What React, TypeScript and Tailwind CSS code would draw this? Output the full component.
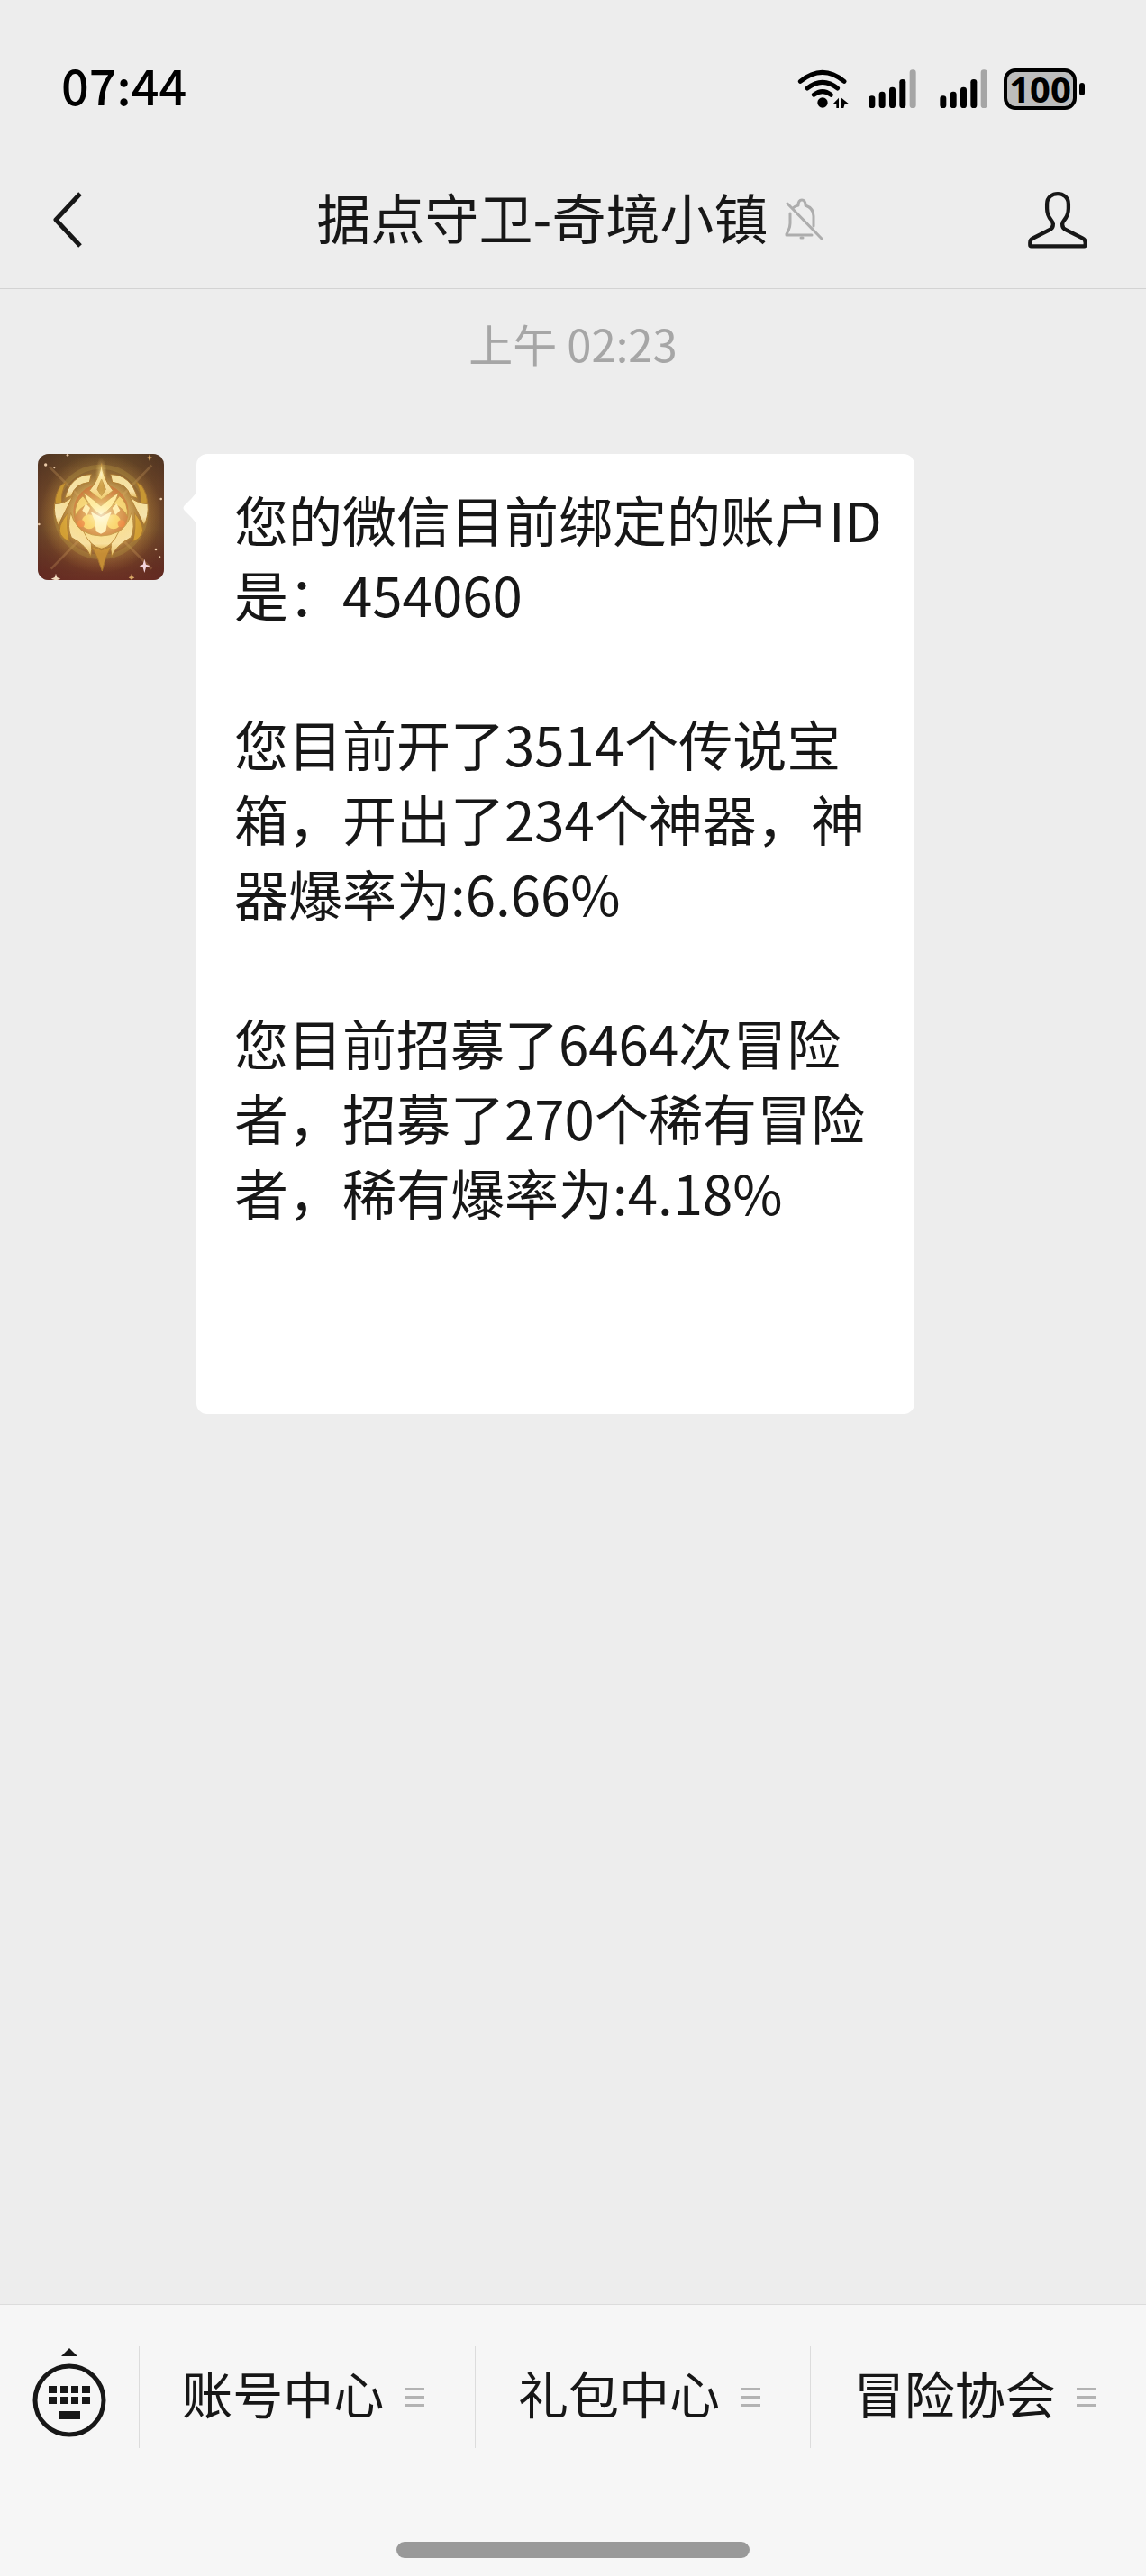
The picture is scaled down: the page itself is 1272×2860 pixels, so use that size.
import React from 'react'

const message = [
  '您的微信目前绑定的账户ID是：454060',
  '您目前开了3514个传说宝箱，开出了234个神器，神器爆率为:6.66%',
  '您目前招募了6464次冒险者，招募了270个稀有冒险者，稀有爆率为:4.18%',
]

const menus = ['账号中心', '礼包中心', '冒险协会']

const WifiIcon = () => (
  <svg width="57" height="46" viewBox="0 0 171 138" fill="none" stroke="#000" strokeWidth="15" strokeLinecap="round">
    <path d="M10 43Q84 -17 156 43" />
    <path d="M33 66Q84 26 134 66" />
    <path d="M55 88Q84 66 112 88" />
    <circle cx="84" cy="114" r="17" fill="#000" stroke="none" />
    <path d="M138 98v34h-8v-12h-13zM147 98l24 20h-13l-4 14h-7z" fill="#000" stroke="none" />
  </svg>
)

const SignalIcon = () => (
  <svg width="53" height="46" viewBox="0 0 159 138">
    <rect x="1" y="91" width="21" height="41" rx="10" />
    <rect x="35" y="77" width="21" height="55" rx="10" />
    <rect x="69" y="62" width="21" height="70" rx="10" />
    <rect x="103" y="36" width="21" height="96" rx="10" />
    <rect x="137" y="4" width="21" height="128" rx="10" fill="#a5a5a5" />
  </svg>
)

const BellOffIcon = () => (
  <svg width="44" height="48" viewBox="0 0 44 48" fill="none" stroke="#adadad" strokeWidth="3" strokeLinecap="round" strokeLinejoin="round">
    <path d="M7 17V28Q7 33 3 40V41H31" />
    <path d="M10 11Q12 9 16 8Q16 2 20 2Q24 2 24 8Q33 11 33 20V31" />
    <path d="M4 6L42 45" />
    <path d="M19 44h2" />
  </svg>
)

const PersonIcon = () => (
  <svg width="66" height="64" viewBox="0 0 200 192" fill="none" stroke="#171717" strokeWidth="13" strokeLinejoin="round">
    <path d="M7 181V173Q7 163 17 158L72 130Q86 124 84 110Q84 104 78 97Q64 80 64 58V43C64 -3 136 -3 136 43V58Q136 80 122 97Q116 104 116 110Q114 124 128 130L183 158Q193 163 193 173V181Q193 185 189 185H11Q7 185 7 181Z" />
  </svg>
)

const Avatar = () => (
  <svg className="h-[140px] w-[140px] shrink-0 rounded-xl" viewBox="36 42 420 420" role="img" aria-label="据点守卫">
    <defs>
      <radialGradient id="back" cx="50%" cy="48%" r="70%">
        <stop offset="0" stopColor="#d9a04c" />
        <stop offset="0.45" stopColor="#93662f" />
        <stop offset="0.7" stopColor="#6b4529" />
        <stop offset="1" stopColor="#4e2a21" />
      </radialGradient>
      <linearGradient id="base" x1="0" y1="0" x2="0" y2="1">
        <stop offset="0" stopColor="#4b3f20" stopOpacity="0.4" />
        <stop offset="0.6" stopColor="#6b2a20" stopOpacity="0" />
        <stop offset="1" stopColor="#6b2922" stopOpacity="0.75" />
      </linearGradient>
      <radialGradient id="glow">
        <stop offset="0" stopColor="#fffbe0" />
        <stop offset="0.35" stopColor="#ffe98f" stopOpacity="0.7" />
        <stop offset="1" stopColor="#ffc85a" stopOpacity="0" />
      </radialGradient>
      <linearGradient id="gold" x1="0" y1="0" x2="0" y2="1">
        <stop offset="0" stopColor="#f4e09a" />
        <stop offset="0.7" stopColor="#f6e3ac" />
        <stop offset="1" stopColor="#e3b95c" />
      </linearGradient>
    </defs>
    <rect x="36" y="42" width="420" height="420" fill="url(#back)" />
    <rect x="36" y="42" width="420" height="420" fill="url(#base)" />
    <path d="M75 85L415 425M415 80L80 425" stroke="#e0ad6a" strokeWidth="8" opacity="0.25" />
    <circle cx="246" cy="235" r="150" fill="none" stroke="#a98a3a" strokeWidth="16" opacity="0.35" />
    <ellipse cx="246" cy="240" rx="200" ry="200" fill="url(#glow)" opacity="0.45" />
    <circle cx="246" cy="235" r="92" fill="#bd6431" />
    <g fill="url(#gold)" stroke="#a8762f" strokeWidth="3" strokeLinejoin="round">
      <path d="M126 190Q145 112 214 110L208 136Q158 142 148 182Z" />
      <path d="M368 190Q347 112 278 110L284 136Q334 142 344 182Z" />
      <path d="M130 136L112 148Q92 178 94 210L116 204Q112 174 130 136Z" fill="#c79733" />
      <path d="M364 136L382 148Q402 178 400 210L378 204Q382 174 364 136Z" fill="#c79733" />
      <path d="M92 208Q124 210 152 184Q130 226 104 280Q88 246 92 208Z" />
      <path d="M402 208Q370 210 342 184Q364 226 390 280Q406 246 402 208Z" />
      <path d="M136 238Q98 286 112 310Q122 328 142 334Q130 290 136 238Z" fill="#d29f34" />
      <path d="M358 238Q396 286 382 310Q372 328 352 334Q364 290 358 238Z" fill="#d29f34" />
      <path d="M146 238Q160 288 200 308Q222 336 212 384Q198 346 148 320Q132 288 146 238Z" />
      <path d="M348 238Q334 288 294 308Q272 336 282 384Q296 346 346 320Q362 288 348 238Z" />
      <path d="M188 300Q246 330 306 300Q284 350 248 358Q210 350 188 300Z" />
      <path d="M216 350L248 362L280 350Q258 390 250 432Q238 390 216 350Z" fill="#c58d35" />
      <path d="M186 182Q156 206 160 250Q172 222 206 208Z" fill="#f0cf72" />
      <path d="M308 182Q338 206 334 250Q322 222 288 208Z" fill="#f0cf72" />
      <path d="M248 74Q252 124 286 164Q262 184 247 194Q232 184 208 164Q242 124 248 74Z" />
      <path d="M248 126L262 160L248 182L234 160Z" fill="#b68537" />
      <path d="M188 170Q212 186 246 216Q280 186 306 170Q290 222 246 246Q206 222 188 170Z" fill="#fff0b5" />
    </g>
    <g fill="#f6c95e">
      <circle cx="206" cy="268" r="24" />
      <circle cx="288" cy="268" r="24" />
    </g>
    <circle cx="180" cy="274" r="12" fill="#e2622a" />
    <circle cx="314" cy="274" r="12" fill="#e2622a" />
    <path d="M196 208L210 222L200 246L184 230Z" fill="#fff5d8" />
    <path d="M298 208L284 222L294 246L310 230Z" fill="#fff5d8" />
    <path d="M212 234L246 252L282 234L268 266L262 300L246 308L230 300L226 266Z" fill="#fffdf0" />
    <ellipse cx="246" cy="245" rx="140" ry="130" fill="url(#glow)" opacity="0.8" />
    <ellipse cx="247" cy="110" rx="20" ry="55" fill="url(#glow)" opacity="0.6" />
    <path d="M391 392L396 410L410 415L396 420L391 438L386 420L374 415L386 410Z" fill="#f3d5dc" />
    <path d="M96 440L100 453L112 458L100 462H92L80 458L92 453Z" fill="#f2dcc0" />
    <path d="M408 43L411 52L420 55L411 58L408 66L405 58L397 55L405 52ZM348 440L351 450L358 454L351 458L348 462L345 458L338 454L345 450Z" fill="#d9a765" />
    <g fill="#e9c9a8">
      <circle cx="62" cy="78" r="5" />
      <circle cx="91" cy="88" r="3" />
      <circle cx="135" cy="46" r="4" />
      <circle cx="446" cy="192" r="4" />
      <circle cx="40" cy="276" r="4" />
      <circle cx="429" cy="360" r="4" />
      <circle cx="442" cy="385" r="3" />
    </g>
  </svg>
)

const StatusBar = () => (
  <div className="flex h-[194px] items-start justify-between px-[68px] pt-[76px]">
    <span className="text-[54px] font-medium leading-[36px] text-black">07:44</span>
    <div className="flex items-center">
      <WifiIcon />
      <div className="ml-[22px] flex gap-[26px]">
        <SignalIcon />
        <SignalIcon />
      </div>
      <div className="ml-[18px] flex h-[46px] w-[81px] items-center justify-center rounded-[13px] border-4 border-black bg-[#bdbdbd] font-['Noto_Sans',sans-serif] text-[40px] font-bold leading-none text-black">
        100
      </div>
      <div className="ml-[3px] h-[14px] w-[6px] rounded-full bg-black" />
    </div>
  </div>
)

const Header = () => (
  <header className="flex h-[127px] items-start justify-between border-b border-[#d3d3d3] pl-[58px] pr-[65px]">
    <button aria-label="返回" className="mt-[18px] w-[67px]">
      <svg width="34" height="64" viewBox="0 0 34 64" fill="none" stroke="#171717" strokeWidth="5" strokeLinejoin="round">
        <path d="M31 3L4 32L31 61" />
      </svg>
    </button>
    <div className="flex items-center gap-[18px]">
      <h1 className="pb-2 text-[60px] leading-[92px]">据点守卫-奇境小镇</h1>
      <BellOffIcon />
    </div>
    <button aria-label="公众号资料" className="mt-[18px]">
      <PersonIcon />
    </button>
  </header>
)

const Bubble = () => (
  <div className="relative w-full max-w-[797px] rounded-xl bg-white pb-10 pl-[42px] pr-[34px] pt-[30px]">
    <svg className="absolute -left-[15px] top-[40px]" width="16" height="40" viewBox="0 0 16 40" fill="#fff">
      <path d="M16 0Q14 5 10 9L2 17Q-1 20 2 23L10 31Q14 35 16 40Z" />
    </svg>
    <div className="flex flex-col gap-[83px] pb-[166px] text-[60px] leading-[83px]">
      {message.map((text) => (
        <p key={text}>{text}</p>
      ))}
    </div>
  </div>
)

const MenuBar = () => (
  <footer className="border-t border-[#dcdcdc] bg-[#f6f6f6] pb-5 pt-[46px]">
    <div className="flex h-[113px]">
      <button aria-label="切换键盘" className="flex w-[154px] shrink-0 justify-center">
        <svg width="82" height="104" viewBox="0 0 82 104" fill="#171717">
          <path d="M41 2L50 11H32Z" />
          <circle cx="41" cy="60" r="38" fill="none" stroke="#171717" strokeWidth="5" />
          <path d="M18 44h9v8h-9zM31 44h8v8h-8zM43 44h8v8h-8zM55 44h9v8h-9z" />
          <path d="M18 56h9v8h-9zM31 56h8v8h-8zM43 56h8v8h-8zM55 56h9v8h-9z" />
          <path d="M29 72h24v9H29z" />
        </svg>
      </button>
      {menus.map((name) => (
        <button key={name} className="flex flex-1 items-center justify-center gap-[23px] border-l border-[#dcdcdc] pr-2">
          <span className="pb-3 text-[56px] leading-[101px]">{name}</span>
          <svg width="22" height="22" viewBox="0 0 22 22" fill="#b3b3b3">
            <path d="M0 0h22v3H0zM0 9h22v3H0zM0 18h22v3H0z" />
          </svg>
        </button>
      ))}
    </div>
    <div className="mx-auto mt-[104px] h-[18px] w-[392px] rounded-full bg-[#999]" />
  </footer>
)

const App = () => {
  return (
    <div className="flex min-h-screen flex-col bg-[#ededed] font-['Noto_Sans_CJK_SC',sans-serif] text-[#171717]">
      <StatusBar />
      <Header />
      <main className="flex-1">
        <p className="pt-5 text-center text-[49px] leading-[80px] text-[#a6a6a6]">上午 02:23</p>
        <div className="mt-[83px] flex items-start gap-9 px-[42px]">
          <Avatar />
          <Bubble />
        </div>
      </main>
      <MenuBar />
    </div>
  )
}

export default App
